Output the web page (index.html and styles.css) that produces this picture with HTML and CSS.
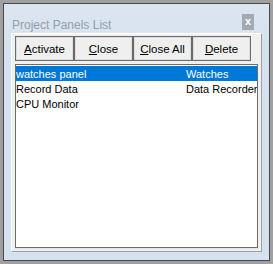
FILE: index.html
```html
<!DOCTYPE html>
<html>
<head>
<meta charset="utf-8">
<link rel="stylesheet" href="styles.css">
</head>
<body>
<div class="window">
  <div class="titlebar">
    <span class="title">Project Panels List</span>
    <span class="close">x</span>
  </div>
  <div class="panel">
    <div class="buttons">
      <button class="btn"><u>A</u>ctivate</button>
      <button class="btn"><u>C</u>lose</button>
      <button class="btn"><u>C</u>lose All</button>
      <button class="btn"><u>D</u>elete</button>
    </div>
    <div class="list">
      <div class="row selected"><span class="name">watches panel</span><span class="type">Watches</span></div>
      <div class="row"><span class="name">Record Data</span><span class="type">Data Recorder</span></div>
      <div class="row"><span class="name">CPU Monitor</span><span class="type"></span></div>
    </div>
  </div>
</div>
</body>
</html>
```
FILE: styles.css
```css
html, body {
  margin: 0;
  padding: 0;
  background: #a0a0a0;
  width: 273px;
  height: 264px;
  overflow: hidden;
}
body {
  padding: 3px;
  box-sizing: border-box;
  font-family: "Liberation Sans", Arial, sans-serif;
}
.window {
  width: 267px;
  height: 258px;
  box-sizing: border-box;
  border: 1px solid #4a4a4a;
  background: linear-gradient(to bottom, #dce6f1 0px, #d6e2ef 40px, #d6e2ef 100%);
  padding: 0 7px 8px 7px;
  display: flex;
  flex-direction: column;
}
.titlebar {
  height: 29px;
  display: flex;
  align-items: flex-start;
  justify-content: space-between;
}
.title {
  margin-top: 14px;
  margin-left: 1px;
  font-size: 12px;
  line-height: 14px;
  color: #979fa8;
}
.close {
  margin-top: 10px;
  margin-right: 8px;
  width: 12px;
  height: 16px;
  background: #a3aab2;
  color: #ffffff;
  font-size: 11px;
  font-weight: bold;
  line-height: 15px;
  text-align: center;
}
.panel {
  flex: 1;
  box-sizing: border-box;
  border-top: 1px solid #ffffff;
  border-left: 1px solid #ffffff;
  border-right: 1px solid #a0a0a0;
  border-bottom: 1px solid #a0a0a0;
  background: #f0f0f0;
  padding: 2px 3px 3px 3px;
  display: flex;
  flex-direction: column;
}
.buttons {
  display: grid;
  grid-template-columns: repeat(4, 59px);
  gap: 0;
  width: 236px;
  height: 25px;
}
.btn {
  margin: 0;
  padding: 0;
  box-sizing: border-box;
  height: 25px;
  border: 1px solid #6b6b6b;
  box-shadow: inset 0 0 0 1px #8c8c8c;
  background: #efefef;
  font-family: "Liberation Sans", Arial, sans-serif;
  font-size: 11.5px;
  color: #000000;
  outline: 1px solid #dcdcdc;
  outline-offset: -2px;
}
.list {
  margin-top: 3px;
  flex: 1;
  box-sizing: border-box;
  border: 1px solid #6b6b6b;
  box-shadow: 0 1px 0 #e3e3e3;
  background: #ffffff;
  padding-top: 1px;
  overflow: hidden;
}
.row {
  height: 15px;
  display: flex;
  align-items: center;
  font-size: 11px;
  color: #000000;
  white-space: nowrap;
}
.row.selected {
  background: #0078d7;
  color: #ffffff;
}
.name {
  width: 170px;
  flex: none;
}
.type {
  flex: none;
}
```
